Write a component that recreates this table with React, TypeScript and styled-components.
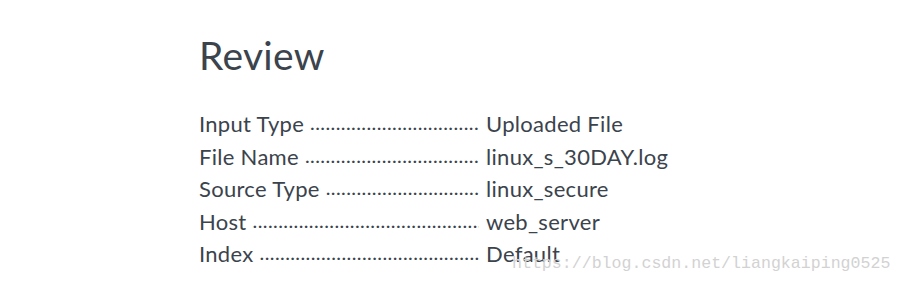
import React from 'react';
import styled, { createGlobalStyle } from 'styled-components';

const GlobalStyle = createGlobalStyle`
    body {
        margin: 0;
        background: #ffffff;
    }
`

const Page = styled.div`
    position: relative;
    width: 903px;
    height: 287px;
    padding: 29px 0 0 199px;
    box-sizing: border-box;
    font-family: Lato, "Open Sans", sans-serif;
    color: #3b434c;
`

const Title = styled.h1`
    margin: 0 0 29px 0;
    font-size: 39px;
    font-weight: 400;
    line-height: 52px;
    letter-spacing: 0.3px;
`

const List = styled.div`
    display: flex;
    flex-direction: column;
`

const Row = styled.div`
    display: flex;
    align-items: baseline;
    height: 32.5px;
    font-size: 22px;
    letter-spacing: 0.3px;
`

const Label = styled.div`
    display: flex;
    width: 280px;
    white-space: nowrap;
    overflow: hidden;
`

const Dots = styled.span`
    flex: 1;
    overflow: hidden;
    margin-left: 6px;
    font-size: 20px;
    letter-spacing: 0.4px;
    &::after {
        content: '${'.'.repeat(120)}';
    }
`

const Value = styled.div`
    margin-left: 7px;
    white-space: nowrap;
`

const Watermark = styled.div`
    position: absolute;
    left: 512px;
    top: 254px;
    font-family: "Liberation Mono", monospace;
    font-size: 16.6px;
    color: #d2d2d2;
    white-space: nowrap;
`

const rows = [
    { label: 'Input Type', value: 'Uploaded File' },
    { label: 'File Name', value: 'linux_s_30DAY.log' },
    { label: 'Source Type', value: 'linux_secure' },
    { label: 'Host', value: 'web_server' },
    { label: 'Index', value: 'Default' },
]

const App: React.FC = () => {
    return (
        <>
            <GlobalStyle />
            <Page>
                <Title>Review</Title>
                <List>
                    {rows.map(r => (
                        <Row key={r.label}>
                            <Label>
                                {r.label}
                                <Dots />
                            </Label>
                            <Value>{r.value}</Value>
                        </Row>
                    ))}
                </List>
                <Watermark>https://blog.csdn.net/liangkaiping0525</Watermark>
            </Page>
        </>
    )
}

export default App
